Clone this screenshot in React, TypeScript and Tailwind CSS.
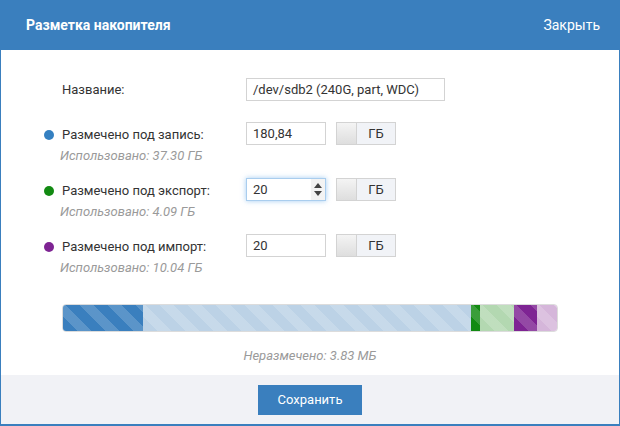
import React from "react";

const stripes =
  "repeating-linear-gradient(45deg, rgba(255,255,255,0) 0px, rgba(255,255,255,0) 10px, rgba(255,255,255,0.17) 10px, rgba(255,255,255,0.17) 20px)";

type Row = { label: string; used: string; value: string; dot: string; focused?: boolean };

const ROWS: Row[] = [
  { label: "Размечено под запись:", used: "Использовано: 37.30 ГБ", value: "180,84", dot: "bg-[#3580c1]" },
  { label: "Размечено под экспорт:", used: "Использовано: 4.09 ГБ", value: "20", dot: "bg-[#128a12]", focused: true },
  { label: "Размечено под импорт:", used: "Использовано: 10.04 ГБ", value: "20", dot: "bg-[#7e2493]" },
];

function UnitToggle() {
  return (
    <div className="ml-[10px] flex h-[23px] w-[60px] border border-[#d3d3d3]">
      <div className="w-[20px] bg-gradient-to-b from-[#f4f4f4] to-[#dedede] border-r border-[#d3d3d3]" />
      <div className="flex flex-1 items-center justify-center bg-[#f1f3f7] text-[13px] text-[#333]">ГБ</div>
    </div>
  );
}

function Spinner() {
  return (
    <div className="flex h-full w-[14px] flex-col items-center justify-center gap-[3px] bg-[#f3f3f3]">
      <svg width="8" height="5" viewBox="0 0 8 5"><path d="M0 5 L4 0 L8 5 Z" fill="#444" /></svg>
      <svg width="8" height="5" viewBox="0 0 8 5"><path d="M0 0 L8 0 L4 5 Z" fill="#444" /></svg>
    </div>
  );
}

function Segment({ w, color, grow }: { w?: number; color: string; grow?: boolean }) {
  return (
    <div
      className={`${color} h-full ${grow ? "flex-1" : "shrink-0"}`}
      style={{ width: w, backgroundImage: stripes }}
    />
  );
}

export default function App() {
  return (
    <div
      className="flex h-[426px] w-[620px] flex-col border-x border-b-2 border-[#3a7fbe] bg-white"
      style={{ fontFamily: "Roboto, 'Liberation Sans', sans-serif" }}
    >
      <header className="flex h-[50px] shrink-0 items-center justify-between bg-[#3a7fbe] pl-[25px] pr-[19px] text-white">
        <h1 className="text-[14px] font-bold">Разметка накопителя</h1>
        <span className="text-[14px]">Закрыть</span>
      </header>

      <div className="flex flex-1 flex-col pt-[28px]">
        <div className="flex items-center pl-[61px]">
          <div className="w-[184px] text-[13px] text-[#333]">Название:</div>
          <div className="flex h-[23px] w-[199px] items-center border border-[#d3d3d3] px-[6px] text-[13px] text-[#333]">
            /dev/sdb2 (240G, part, WDC)
          </div>
        </div>

        <div className="mt-[21px] flex flex-col gap-[12px]">
          {ROWS.map((r) => (
            <div key={r.label} className="flex h-[44px] items-start">
              <div className="flex w-[245px] flex-col pl-[43px]">
                <div className="mt-[5px] flex items-center">
                  <span className={`${r.dot} h-[10px] w-[10px] rounded-full`} />
                  <span className="ml-[8px] text-[13px] leading-[15px] text-[#333]">{r.label}</span>
                </div>
                <div className="ml-[16px] mt-[6px] text-[13px] italic leading-[15px] text-[#9a9a9a]">{r.used}</div>
              </div>
              <div
                className={`flex h-[23px] w-[80px] items-center border text-[13px] text-[#333] ${
                  r.focused
                    ? "border-[#a9cdee] shadow-[0_0_5px_rgba(102,170,233,0.6)]"
                    : "border-[#d3d3d3]"
                }`}
              >
                <span className="flex-1 pl-[6px]">{r.value}</span>
                {r.focused && <Spinner />}
              </div>
              <UnitToggle />
            </div>
          ))}
        </div>

        <div className="mx-[61px] mt-[26px] flex h-[28px] overflow-hidden rounded-[4px] border border-[#dcdcdc]">
          <Segment w={80} color="bg-[#3a7fbe]" />
          <Segment color="bg-[#bcd2e6]" grow />
          <Segment w={9} color="bg-[#128a12]" />
          <Segment w={34} color="bg-[#b3d8b1]" />
          <Segment w={23} color="bg-[#7e2493]" />
          <Segment w={20} color="bg-[#d5b6da]" />
        </div>

        <div className="mt-[14px] text-center text-[13px] italic text-[#9a9a9a]">Неразмечено: 3.83 МБ</div>
      </div>

      <footer className="flex h-[49px] shrink-0 items-center justify-center bg-[#f1f2f6]">
        <button className="h-[30px] w-[104px] bg-[#3a7fbe] text-[13px] text-white">Сохранить</button>
      </footer>
    </div>
  );
}
